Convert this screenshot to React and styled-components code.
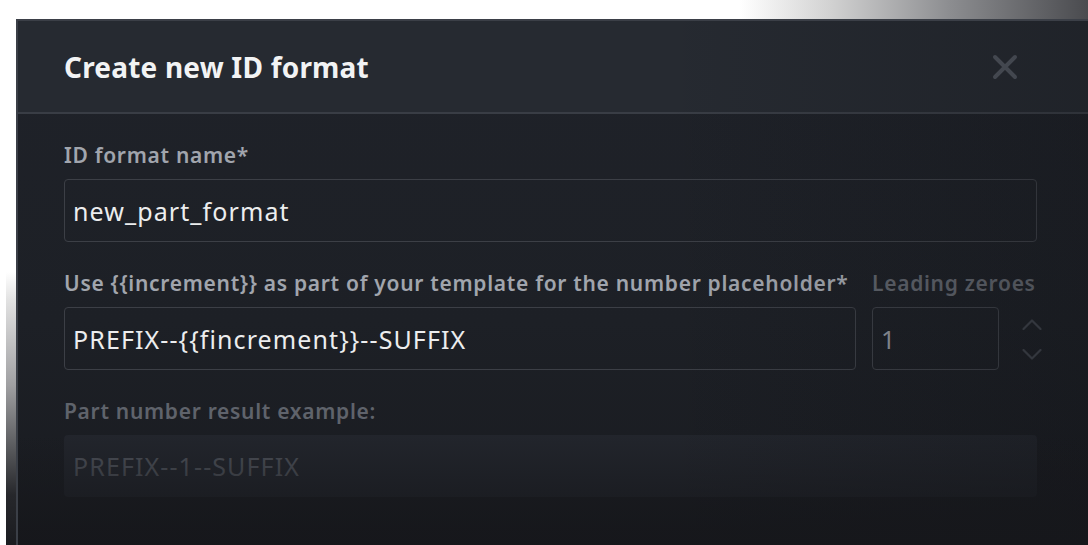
import React from 'react';
import styled, { createGlobalStyle } from 'styled-components';

const GlobalStyle = createGlobalStyle`
   html, body {
      margin: 0;
      height: 100%;
      overflow: hidden;
   }
   body {
      font-family: "Noto Sans", "DejaVu Sans", sans-serif;
      background:
         linear-gradient(to right, #fff 0, #fff 740px, #d2d2d2 830px, #8c8d90 950px, #4a4b4f 1088px) top left / 100% 19px no-repeat,
         linear-gradient(to bottom, #fff 0, #fff 272px, #e2e2e2 300px, #a0a0a2 385px, #5c5d60 445px, #26272b 495px, #1b1c20 545px) 6px 0 / 10px 100% no-repeat,
         #fff;
   }
`;

const Dialog = styled.section`
   position: relative;
   box-sizing: border-box;
   margin: 19px 0 0 16px;
   height: 526px;
   overflow: hidden;
   border-top: 2px solid #3b3f47;
   border-left: 2px solid #3b3f47;
   background: linear-gradient(to bottom, #1f2229 0, #1d2026 300px, #191b20 100%);

   &::before {
      content: '';
      position: absolute;
      inset: 0;
      pointer-events: none;
      background: linear-gradient(to right, rgba(10, 11, 14, 0) 60%, rgba(10, 11, 14, 0.22) 100%);
      z-index: 2;
   }

   &::after {
      content: '';
      position: absolute;
      left: -2px;
      right: 0;
      bottom: 0;
      height: 110px;
      pointer-events: none;
      background: linear-gradient(to bottom, rgba(22, 23, 27, 0) 0, rgba(22, 23, 27, 0.55) 55%, rgba(22, 23, 27, 0.95) 100%);
      z-index: 3;
   }
`;

const Header = styled.header`
   display: flex;
   align-items: center;
   justify-content: space-between;
   height: 93px;
   padding: 0 63px 0 46px;
   box-sizing: border-box;
   background: #262a31;
   border-bottom: 2px solid #393d45;
`;

const Title = styled.h2`
   margin: 0;
   font-size: 28px;
   font-weight: 700;
   color: #f2f3f4;
   letter-spacing: 0.2px;
`;

const CloseButton = styled.button`
   display: flex;
   align-items: center;
   justify-content: center;
   width: 40px;
   height: 40px;
   padding: 0;
   border: none;
   background: transparent;
   color: #4f545d;
   cursor: pointer;
`;

const Body = styled.div`
   display: flex;
   flex-direction: column;
   gap: 27px;
   padding: 27px 51px 0 46px;
`;

const Field = styled.div`
   display: flex;
   flex-direction: column;
   gap: 10px;
`;

const Label = styled.label`
   display: block;
   font-size: 21px;
   line-height: 28px;
   font-weight: 600;
   letter-spacing: 0.7px;
   white-space: nowrap;
   color: ${props => props.$dim ? '#5f636b' : '#a1a5ad'};
`;

const TemplateRow = styled.div`
   display: grid;
   grid-template-columns: 1fr 127px 22px;
   column-gap: 16px;
   row-gap: 10px;
   align-items: center;
`;

const Input = styled.input`
   box-sizing: border-box;
   width: 100%;
   height: 63px;
   padding: 0 8px;
   border: 1px solid #3c3f46;
   border-radius: 4px;
   background: transparent;
   font-family: inherit;
   font-size: 25px;
   letter-spacing: 1.1px;
   color: ${props => props.$dim ? '#8e9299' : '#ecedee'};
   outline: none;
`;

const Spinner = styled.div`
   display: flex;
   flex-direction: column;
   align-items: center;
   justify-self: end;
   gap: 19px;
   margin: 2px -5px 0 0;
   color: #3d4149;
`;

const ResultBox = styled.div`
   box-sizing: border-box;
   height: 62px;
   display: flex;
   align-items: center;
   padding: 0 9px;
   border-radius: 4px;
   background: #22252c;
   font-size: 25px;
   letter-spacing: 1.1px;
   color: #4d5159;
`;

const Chevron = ({ up }) => (
   <svg width="20" height="11" viewBox="0 0 20 11" fill="none" stroke="currentColor" strokeWidth="2.2" strokeLinecap="round" strokeLinejoin="round">
      {up ? <path d="M1.5 10 L10 1.5 L18.5 10" /> : <path d="M1.5 1 L10 9.5 L18.5 1" />}
   </svg>
);

const App = () => {
   return (
      <>
         <GlobalStyle />
         <Dialog>
            <Header>
               <Title>Create new ID format</Title>
               <CloseButton aria-label="Close">
                  <svg width="26" height="26" viewBox="0 0 26 26" fill="none" stroke="currentColor" strokeWidth="4" strokeLinecap="round">
                     <path d="M3 3 L23 23 M23 3 L3 23" />
                  </svg>
               </CloseButton>
            </Header>
            <Body>
               <Field>
                  <Label>ID format name*</Label>
                  <Input defaultValue="new_part_format" />
               </Field>
               <TemplateRow>
                  <Label>Use {'{{increment}}'} as part of your template for the number placeholder*</Label>
                  <Label $dim>Leading zeroes</Label>
                  <span />
                  <Input defaultValue="PREFIX--{{fincrement}}--SUFFIX" />
                  <Input $dim defaultValue="1" />
                  <Spinner>
                     <Chevron up />
                     <Chevron />
                  </Spinner>
               </TemplateRow>
               <Field>
                  <Label $dim>Part number result example:</Label>
                  <ResultBox>PREFIX--1--SUFFIX</ResultBox>
               </Field>
            </Body>
         </Dialog>
      </>
   );
};

export default App;
